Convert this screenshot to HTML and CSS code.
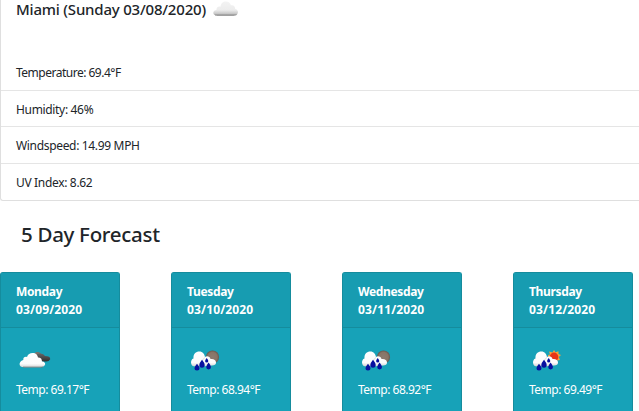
FILE: index.html
```html
<!DOCTYPE html>
<html lang="en">
<head>
<meta charset="utf-8">
<title>Weather Dashboard</title>
<link rel="stylesheet" href="styles.css">
</head>
<body>
<svg class="defs" width="0" height="0" aria-hidden="true">
  <defs>
    <linearGradient id="white" x1="0" y1="0" x2="0" y2="1"><stop offset="0" stop-color="#fff"/><stop offset=".75" stop-color="#fcfcfc"/><stop offset="1" stop-color="#d4d4d4"/></linearGradient>
    <linearGradient id="pale" x1="0" y1="0" x2="0" y2="1"><stop offset="0" stop-color="#f3f3f3"/><stop offset=".6" stop-color="#ececec"/><stop offset=".84" stop-color="#c9c9c9"/><stop offset="1" stop-color="#777"/></linearGradient>
    <linearGradient id="dark" x1="0" y1="0" x2="0" y2="1"><stop offset="0" stop-color="#666"/><stop offset="1" stop-color="#303030"/></linearGradient>
    <radialGradient id="moon"><stop offset="0" stop-color="#8b7b70"/><stop offset=".7" stop-color="#887567"/><stop offset="1" stop-color="#65574e"/></radialGradient>
    <g id="rain">
      <path d="M5 17.300C1.500 17.300 .8 10.500 4.500 9.500C4 5 7 2.500 10.300 2.500C13.800 2.500 15.500 5 16 8C18 6.500 21 7.500 21.500 10C24.500 9.500 27 11 27 13.500C27 15.700 25.500 16.500 23 16.500L16 17.300Z" fill="url(#white)"/>
      <path d="M12.500 13.500Q13.500 9.800 16 8.500" fill="none" stroke="#c8c8c8" stroke-width=".6"/>
      <path d="M8 14.700Q5.500 17.500 5.500 19.100A2.500 2.500 0 0 0 10.500 19.100Q10.500 17.500 8 14.700ZM13 10.800Q10.300 14 10.300 16A2.700 2.700 0 0 0 15.700 16Q15.700 14 13 10.800ZM19.600 13.500Q17.200 16.600 17.200 18.100A2.400 2.400 0 0 0 22 18.100Q22 16.600 19.600 13.500ZM17.700 9Q16.100 11 16.100 12A1.600 1.500 0 0 0 19.300 12Q19.300 11 17.700 9Z" fill="#0710a0"/>
    </g>
  </defs>
</svg>
<section class="current">
  <h1 class="city"><span>Miami (Sunday 03/08/2020)</span>
    <svg class="city-icon" width="28" height="18" viewBox="0 0 28 18"><path d="M3 15C.5 14 .7 10.500 4.500 9.700C4.500 7 6.500 6.200 8.500 6.800C9 3 11 1.500 13.700 1.500C16.500 1.500 18.300 3 18.900 5.300C21.500 4.700 23.200 6.500 23.200 9C26 9.500 26.800 12.500 25 14.500C24 16 21 15.800 18 15.800H6C4.500 15.800 3.500 15.600 3 15Z" fill="url(#pale)"/></svg>
  </h1>
  <ul class="stats">
    <li class="temperature">Temperature: 69.4°F</li>
    <li>Humidity: 46%</li>
    <li>Windspeed: 14.99 MPH</li>
    <li>UV Index: 8.62</li>
  </ul>
</section>
<h2 class="title">5 Day Forecast</h2>
<main class="days">
  <article class="day"><header>Monday<br><span>03/09/2020</span></header>
    <div class="body"><svg width="34" height="24" viewBox="0 0 34 24"><circle cx="19.500" cy="6.500" r="3.600" fill="#806f67"/><path d="M16 10Q17 5 21.500 4.500Q25.500 4 27 7Q32.500 7 32.200 10.200Q31 12.600 28 12.500H20Z" fill="url(#dark)"/><path d="M4 18C0 17 1.500 11.500 5.300 11C5 8.500 7 7.300 9 8C10 5 12 4 14.500 4C18 4 19.500 6 20 8.500C23 8 24 10.500 24 12.500C27 12.500 28 15.300 26.500 16.500C25.500 18.300 22 18.300 18 18.300H7Z" fill="url(#white)"/><path d="M5 18.100H25" stroke="#777" stroke-width=".8"/></svg><p>Temp: 69.17°F</p></div>
  </article>
  <article class="day"><header>Tuesday<br><span>03/10/2020</span></header>
    <div class="body"><svg width="34" height="24" viewBox="0 0 34 24"><circle cx="23.500" cy="8" r="6.600" fill="url(#moon)"/><use href="#rain"/></svg><p>Temp: 68.94°F</p></div>
  </article>
  <article class="day"><header>Wednesday<br><span>03/11/2020</span></header>
    <div class="body"><svg width="34" height="24" viewBox="0 0 34 24"><circle cx="23.500" cy="8" r="6.600" fill="url(#moon)"/><use href="#rain"/></svg><p>Temp: 68.92°F</p></div>
  </article>
  <article class="day"><header>Thursday<br><span>03/12/2020</span></header>
    <div class="body"><svg width="34" height="24" viewBox="0 0 34 24"><path d="M23 1L24.500 3.300L27.500 2.200L27.500 5L30 6L27.800 8L29 11L26 11.500L25 14L18 11L17 6L19 5.500L18 2.500L21.500 3.500Z" fill="#f9a13a"/><circle cx="23" cy="8" r="4.400" fill="#e93417"/><use href="#rain"/></svg><p>Temp: 69.49°F</p></div>
  </article>
</main>
</body>
</html>
```
FILE: styles.css
```css
* { box-sizing: border-box; }
html { overflow: hidden; }
body {
  margin: 0;
  height: 411px;
  overflow: hidden;
  background: #fff;
  color: #212529;
  font: 12px/18px "Segoe UI", "Noto Sans", "Open Sans", sans-serif;
}
svg { display: block; }
.defs { position: absolute; }
.current {
  height: 201px;
  border: 1px solid #dfdfdf;
  border-width: 0 0 1px 1px;
  border-radius: 0 0 0 3px;
}
.city {
  display: flex;
  height: 54px;
  margin: 0;
  padding-left: 15px;
  font-size: 15px;
  font-weight: 500;
  line-height: 18px;
  white-space: nowrap;
}
.city span { width: 196px; letter-spacing: -0.2px; }
.stats { margin: 0; padding: 0; list-style: none; }
.stats li {
  height: 36.5px;
  padding: 10px 15px 0;
  border-bottom: 1px solid #e5e5e5;
  letter-spacing: -0.33px;
}
.stats .temperature { letter-spacing: -0.5px; }
.stats li:last-child { border-bottom: 0; }
.title {
  height: 71px;
  margin: 0;
  padding: 19px 0 0 21px;
  font-size: 20.5px;
  line-height: 29px;
  font-weight: 500;
  letter-spacing: -0.3px;
}
.days {
  display: grid;
  grid-template-columns: repeat(4, 120px);
  column-gap: 51px;
}
.day {
  height: 139px;
  border: 1px solid #158c9d;
  border-bottom: 0;
  border-radius: 3px 3px 0 0;
  background: #17a2b8;
  color: #fff;
}
.day header {
  height: 55px;
  padding: 10px 15px 0;
  border-bottom: 1px solid #158c9d;
  background: #179cb1;
  font-weight: 700;
  letter-spacing: -0.35px;
}
.day header span { letter-spacing: 0.15px; }
.body { padding: 21px 15px 0; }
.body svg { margin-left: 2px; }
.body p { margin: 8px 0 0; letter-spacing: -0.5px; white-space: nowrap; }
```
